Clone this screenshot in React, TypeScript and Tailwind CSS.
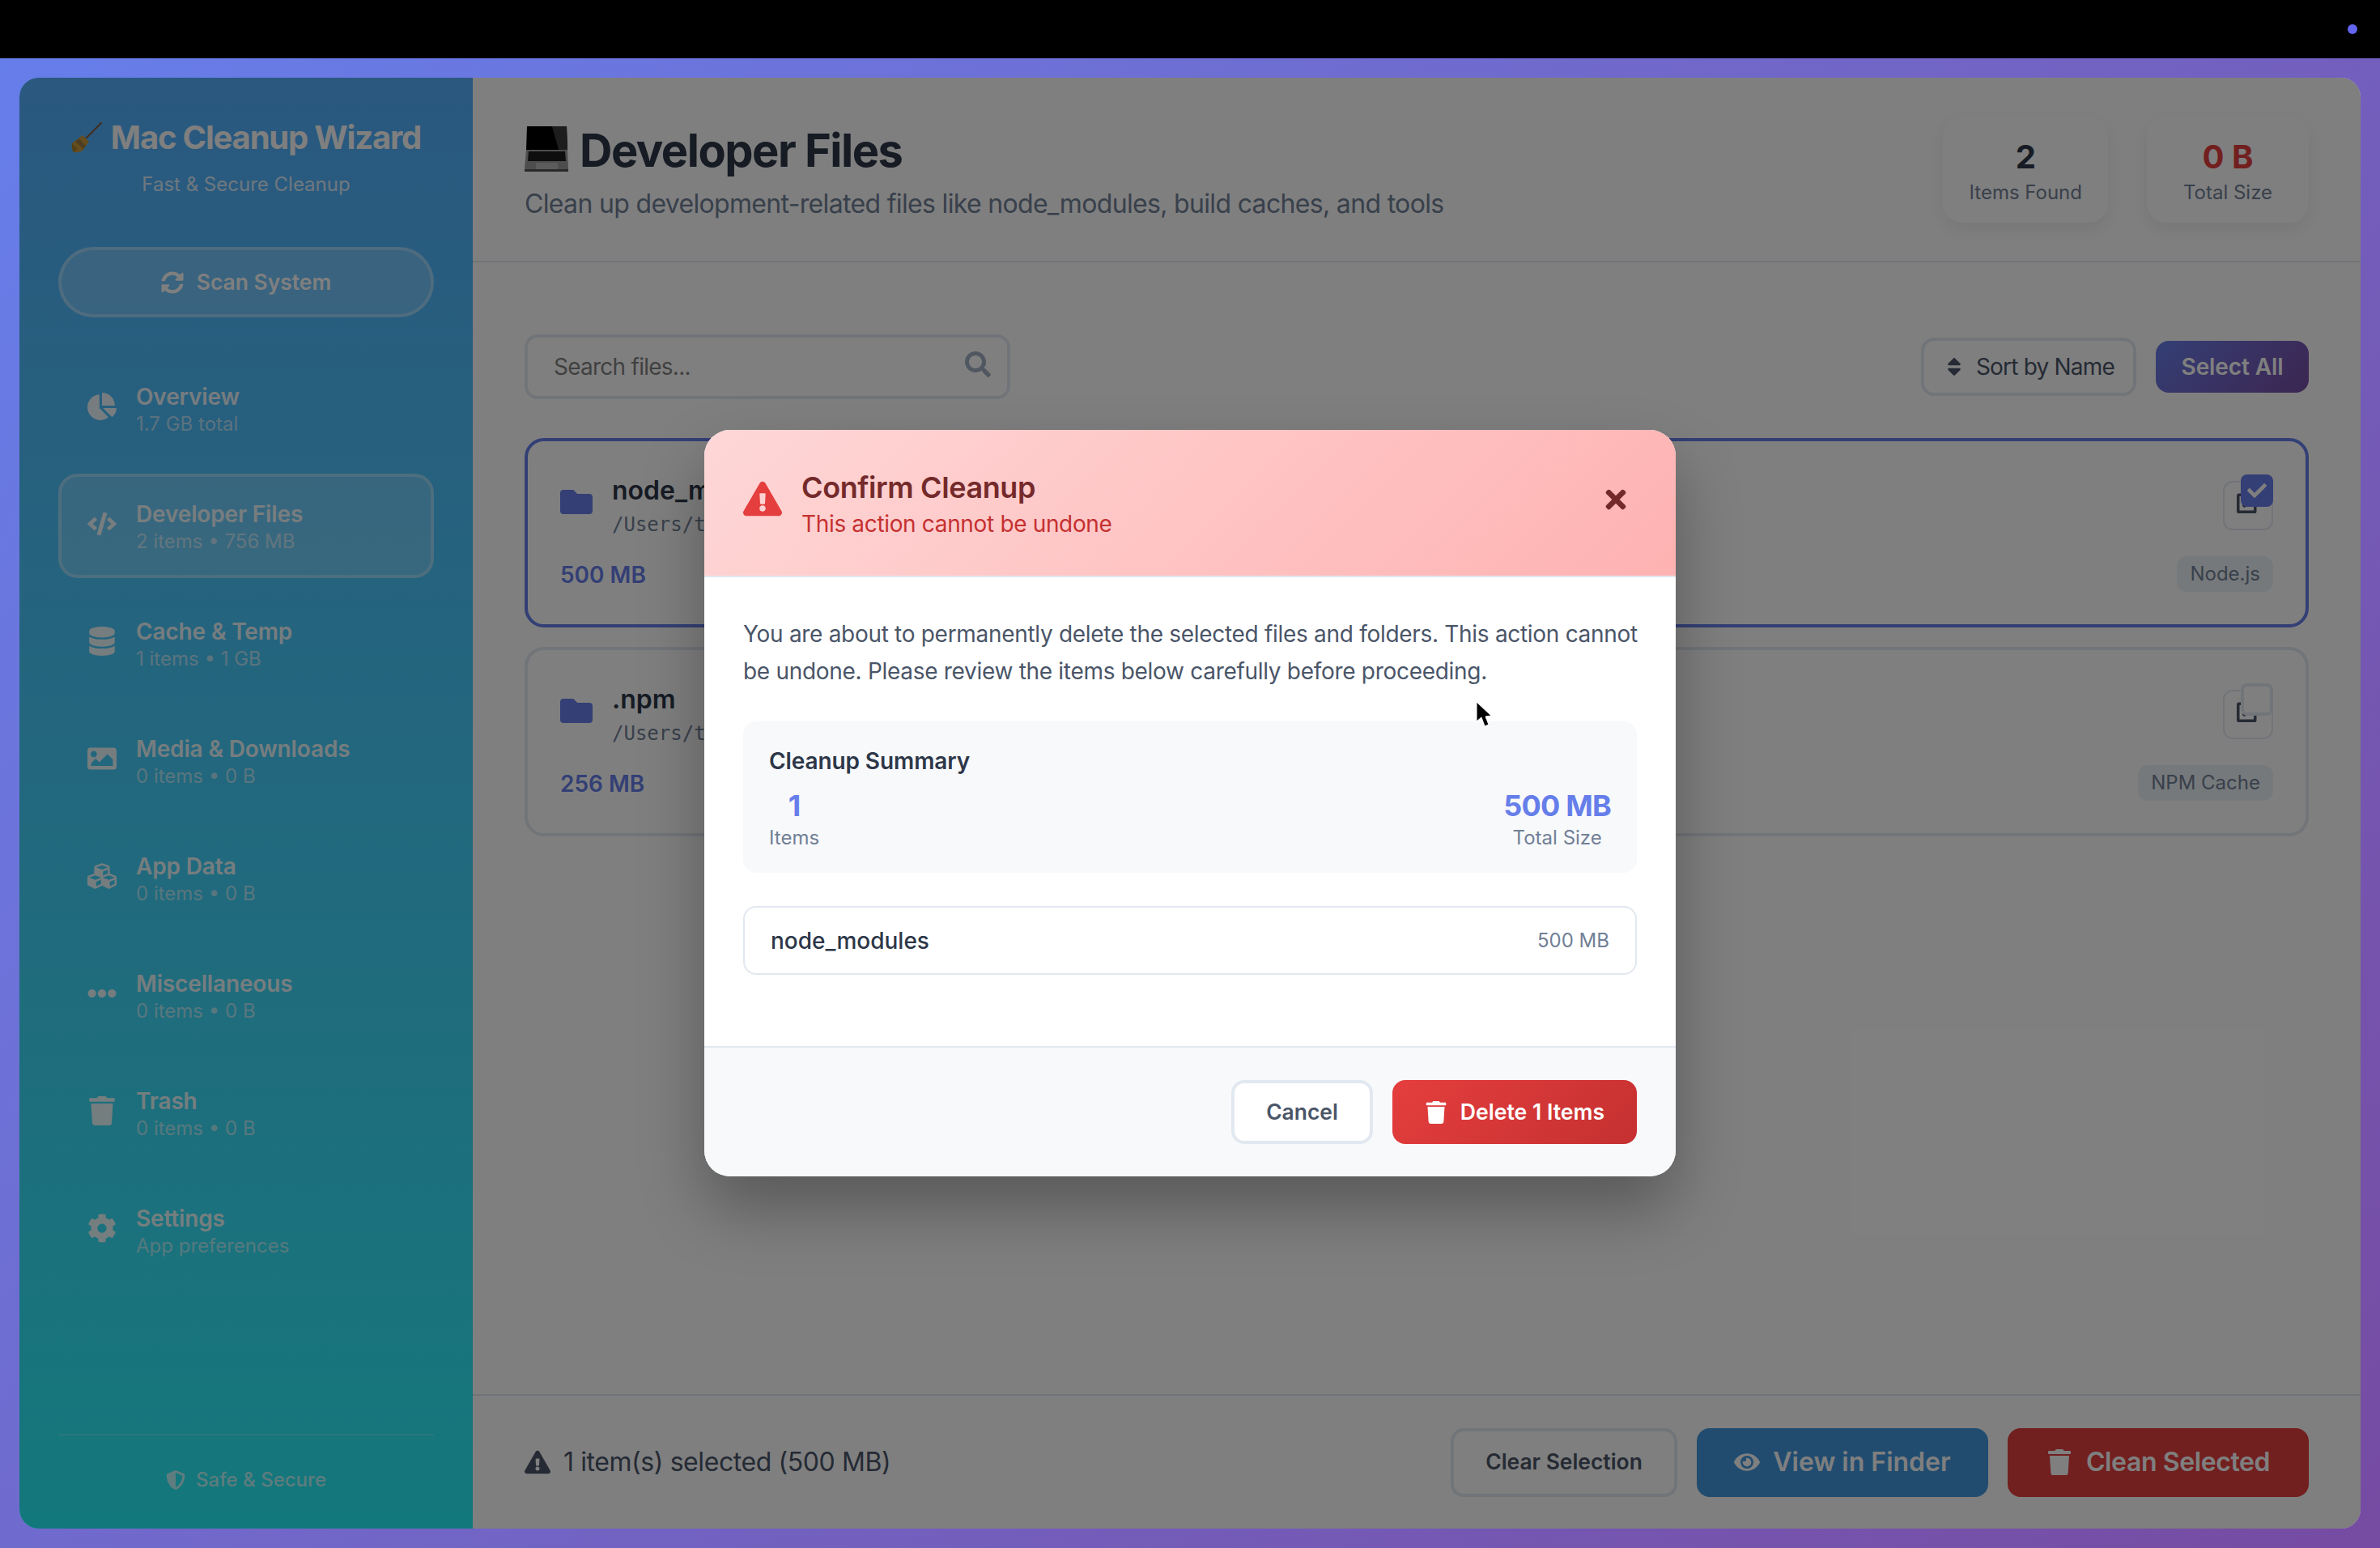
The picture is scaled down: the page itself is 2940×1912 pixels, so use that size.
import type { ReactNode } from 'react'
import {
  FaChartPie,
  FaCheck,
  FaCode,
  FaCog,
  FaCubes,
  FaDatabase,
  FaEllipsisH,
  FaExclamationTriangle,
  FaExternalLinkAlt,
  FaEye,
  FaFolder,
  FaImage,
  FaSearch,
  FaShieldAlt,
  FaSort,
  FaSyncAlt,
  FaTimes,
  FaTrash,
} from 'react-icons/fa'

const navItems = [
  { icon: <FaChartPie size={36} />, title: 'Overview', sub: '1.7 GB total' },
  { icon: <FaCode size={36} />, title: 'Developer Files', sub: '2 items • 756 MB', active: true },
  { icon: <FaDatabase size={36} />, title: 'Cache & Temp', sub: '1 items • 1 GB' },
  { icon: <FaImage size={36} />, title: 'Media & Downloads', sub: '0 items • 0 B' },
  { icon: <FaCubes size={36} />, title: 'App Data', sub: '0 items • 0 B' },
  { icon: <FaEllipsisH size={36} />, title: 'Miscellaneous', sub: '0 items • 0 B' },
  { icon: <FaTrash size={36} />, title: 'Trash', sub: '0 items • 0 B' },
  { icon: <FaCog size={36} />, title: 'Settings', sub: 'App preferences' },
]

function Broom() {
  return (
    <svg viewBox="0 0 38 38" className="h-[38px] w-[38px] shrink-0" aria-hidden="true">
      <path d="M37 1 L17 21" stroke="#8a5a3a" strokeWidth="2" strokeLinecap="round" />
      <path d="M14 16 L22 24 L14 35 Q8 38 3 37 Q0 33 1 26 Z" fill="#c99a3c" />
      <path d="M9 20 L18 29 L15 33 L5 24 Z" fill="#9a7a44" />
      <path d="M3 37 Q0 33 1 26 L8 33 Z" fill="#a8802e" />
    </svg>
  )
}

function Laptop() {
  return (
    <svg viewBox="0 0 54 56" className="h-[56px] w-[54px] shrink-0" aria-hidden="true">
      <path d="M3 0 H52 L53 29 H2 Z" fill="#000000" />
      <path d="M34 0 H52 L53 29 H42 Z" fill="#3a3a3a" />
      <path d="M2 29 H53 L54 53 H0 Z" fill="#9a9a9a" />
      <path d="M5 31 H50 L51 43 H4 Z" fill="#1c1c1c" />
      <path d="M14 45 H41 V53 H14 Z" fill="#b8b8b8" />
      <path d="M0 53 H54 V56 H0 Z" fill="#555555" />
    </svg>
  )
}

function NavItem({ icon, title, sub, active }: { icon: ReactNode; title: string; sub: string; active?: boolean }) {
  return (
    <div
      className={`flex h-[129px] items-center gap-6 rounded-3xl border-4 pl-8 ${
        active ? 'border-white/30 bg-white/20' : 'border-transparent'
      }`}
    >
      <span className="-mt-[6px] flex w-9 justify-center text-white/90">{icon}</span>
      <div className="pt-1">
        <div className="text-[28px] leading-[34px] font-semibold tracking-[-0.15px] text-white/90">{title}</div>
        <div className="text-2xl leading-[34px] text-white/60">{sub}</div>
      </div>
    </div>
  )
}

function Sidebar() {
  return (
    <aside className="flex w-[560px] shrink-0 flex-col bg-linear-to-b from-[#54b0fe] to-[#26f0f8] px-12">
      <div className="mt-[50px] flex items-center justify-center gap-[11px]">
        <Broom />
        <h1 className="text-[40px] leading-12 font-bold tracking-[-1.2px] text-white">Mac Cleanup Wizard</h1>
      </div>
      <p className="mt-[19px] text-center text-2xl leading-[29px] text-white/80">Fast &amp; Secure Cleanup</p>
      <button
        type="button"
        className="mt-[63px] flex h-[87px] items-center justify-center gap-4 rounded-full border-4 border-white/30 bg-white/20 text-[26.4px] font-semibold text-white"
      >
        <FaSyncAlt size={28} />
        Scan System
      </button>
      <nav className="mt-12 flex flex-1 flex-col gap-4">
        {navItems.map((item) => (
          <NavItem key={item.title} {...item} />
        ))}
      </nav>
      <div className="flex h-[117px] shrink-0 items-center justify-center gap-[13px] border-t-2 border-white/20 pb-[6px] text-2xl font-medium text-white/70">
        <FaShieldAlt size={24} />
        Safe &amp; Secure
      </div>
    </aside>
  )
}

function StatCard({ value, label, red }: { value: string; label: string; red?: boolean }) {
  return (
    <div className="flex h-[131px] min-w-[200px] flex-col items-center justify-center rounded-3xl bg-white px-8 shadow-[0_8px_24px_rgba(0,0,0,0.08)]">
      <div className={`mt-[4px] text-[40px] leading-12 font-bold ${red ? 'text-[#e53e3e]' : 'text-[#2d3748]'}`}>{value}</div>
      <div className="mt-[5px] text-2xl leading-[29px] text-[#718096]">{label}</div>
    </div>
  )
}

function FileCard({
  name,
  path,
  size,
  tag,
  selected,
}: {
  name: string
  path: string
  size: string
  tag: string
  selected?: boolean
}) {
  return (
    <div className={`rounded-3xl border-4 bg-white p-10 ${selected ? 'border-[#667eea]' : 'border-[#e2e8f0]'}`}>
      <div className="flex h-[85px] items-center gap-6">
        <FaFolder size={40} className="-mt-4 text-[#667eea]" />
        <div className="mb-[6px] flex-1">
          <div className="text-[32px] leading-[39px] font-semibold text-[#2d3748]">{name}</div>
          <div className="mt-[9px] font-['DejaVu_Sans_Mono',monospace] text-2xl leading-[29px] text-[#718096]">{path}</div>
        </div>
        <div className="relative mb-[7px] flex h-[61px] w-[62px] items-center justify-center rounded-xl border-2 border-[#e2e8f0] text-[#4a5568]">
          <FaExternalLinkAlt size={28} className="-mt-2" />
          {selected ? (
            <span className="absolute -top-[10px] -right-[2px] flex h-10 w-10 items-center justify-center rounded-lg bg-[#667eea] text-white">
              <FaCheck size={24} />
            </span>
          ) : (
            <span className="absolute -top-[10px] -right-[2px] h-10 w-10 rounded-lg border-4 border-[#e2e8f0] bg-white" />
          )}
        </div>
      </div>
      <div className="mt-[17px] flex items-center justify-between">
        <span className="pt-[2px] text-[28px] font-semibold text-[#667eea]">{size}</span>
        <span className="flex h-11 items-center rounded-xl bg-[#edf2f7] px-4 text-2xl text-[#718096]">{tag}</span>
      </div>
    </div>
  )
}

function Main() {
  return (
    <main className="flex min-w-0 flex-1 flex-col bg-white">
      <header className="flex h-[228px] shrink-0 items-center justify-between border-b-2 border-[#e2e8f0] px-16">
        <div>
          <div className="flex items-center gap-[14px]">
            <Laptop />
            <h2 className="pt-[4px] text-[56px] leading-[68px] font-bold tracking-[-1.5px] text-[#2d3748]">Developer Files</h2>
          </div>
          <p className="mt-[12px] text-[32px] leading-[39px] tracking-[-0.67px] text-[#718096]">
            Clean up development-related files like node_modules, build caches, and tools
          </p>
        </div>
        <div className="flex gap-12">
          <StatCard value="2" label="Items Found" />
          <StatCard value="0 B" label="Total Size" red />
        </div>
      </header>

      <section className="flex-1 px-16 pt-[89px]">
        <div className="flex items-center justify-between">
          <div className="relative h-20 w-[600px]">
            <input
              placeholder="Search files..."
              className="h-full w-full rounded-2xl border-4 border-[#e2e8f0] bg-white pr-20 pl-8 text-[28px] tracking-[-0.75px] outline-none"
            />
            <FaSearch size={32} className="absolute top-[21px] right-6 text-[#a0aec0]" />
          </div>
          <div className="flex items-center gap-6">
            <button
              type="button"
              className="flex h-[72px] items-center gap-[13px] rounded-2xl border-4 border-[#e2e8f0] bg-white px-[23px] text-[28px] tracking-[-0.8px] text-[#4a5568]"
            >
              <FaSort size={28} />
              Sort by Name
            </button>
            <button
              type="button"
              className="h-16 w-[189px] rounded-2xl bg-linear-135 from-[#667eea] to-[#764ba2] text-[28px] font-semibold tracking-[-0.1px] text-white"
            >
              Select All
            </button>
          </div>
        </div>
        <div className="mt-[48px] flex flex-col gap-6">
          <FileCard name="node_modules" path="/Users/t" size="500 MB" tag="Node.js" selected />
          <FileCard name=".npm" path="/Users/t" size="256 MB" tag="NPM Cache" />
        </div>
      </section>

      <footer className="flex h-[166px] shrink-0 items-center justify-between border-t-2 border-[#e2e8f0] pr-16 pl-16">
        <div className="flex items-center gap-4 text-[32px] tracking-[-0.42px] text-[#4a5568]">
          <FaExclamationTriangle size={32} />
          1 item(s) selected (500 MB)
        </div>
        <div className="flex gap-6">
          <button
            type="button"
            className="h-[85px] w-[280px] rounded-2xl border-4 border-[#e2e8f0] bg-white text-[26.4px] font-semibold text-[#4a5568]"
          >
            Clear Selection
          </button>
          <button
            type="button"
            className="flex h-[85px] w-[360px] items-center justify-center gap-4 rounded-2xl bg-[#4299e1] text-[32px] font-semibold text-white"
          >
            <FaEye size={32} />
            View in Finder
          </button>
          <button
            type="button"
            className="flex h-[85px] w-[372px] items-center justify-center gap-[17px] rounded-2xl bg-[#e53e3e] text-[32px] font-semibold tracking-[-0.4px] text-white"
          >
            <FaTrash size={32} />
            Clean Selected
          </button>
        </div>
      </footer>
    </main>
  )
}

function ConfirmModal() {
  return (
    <div className="relative w-[1200px] overflow-hidden rounded-[32px] bg-white shadow-[0_40px_80px_rgba(0,0,0,0.3)]">
      <div className="flex h-[182px] items-center justify-between border-b-2 border-[#e2e8f0] bg-linear-135 from-[#fed7d7] to-[#feb2b2] pr-[56px] pl-12">
        <div className="flex items-center gap-6">
          <FaExclamationTriangle size={48} className="-mt-[10px] text-[#e53e3e]" />
          <div className="pt-[2px]">
            <div className="text-[36px] leading-[44px] font-semibold tracking-[-0.4px] text-[#742a2a]">Confirm Cleanup</div>
            <div className="mt-[6px] text-[28px] leading-[34px] tracking-[-0.34px] text-[#c53030]">This action cannot be undone</div>
          </div>
        </div>
        <FaTimes size={36} className="-mt-2 text-[#742a2a]" />
      </div>
      <div className="h-[579px] px-12 pt-12">
        <p className="whitespace-nowrap text-[28px] leading-[45.5px] tracking-[-0.3px] text-[#4a5568]">
          You are about to permanently delete the selected files and folders. This action cannot
          <br />
          be undone. Please review the items below carefully before proceeding.
        </p>
        <div className="mt-[39px] h-[187px] rounded-2xl bg-[#f8f9fb] px-8 pt-8">
          <div className="text-[28px] leading-[34px] font-semibold tracking-[-0.1px] text-[#2d3748]">Cleanup Summary</div>
          <div className="mt-[14px] flex justify-between">
            <div className="text-center">
              <div className="text-[36px] leading-12 font-bold tracking-[-0.8px] text-[#667eea]">1</div>
              <div className="mt-[1px] text-2xl leading-[29px] text-[#718096]">Items</div>
            </div>
            <div className="text-center">
              <div className="text-[36px] leading-12 font-bold tracking-[-0.8px] text-[#667eea]">500 MB</div>
              <div className="mt-[1px] text-2xl leading-[29px] text-[#718096]">Total Size</div>
            </div>
          </div>
        </div>
        <div className="mt-[41px] flex h-[85px] items-center justify-between rounded-2xl border-2 border-[#e2e8f0] px-8">
          <span className="text-[28px] font-medium text-[#2d3748]">node_modules</span>
          <span className="text-2xl text-[#718096]">500 MB</span>
        </div>
      </div>
      <div className="flex h-[161px] items-center justify-end gap-6 border-t-2 border-[#e2e8f0] bg-[#f8f9fb] px-12">
        <button
          type="button"
          className="h-[79px] w-[175px] rounded-2xl border-4 border-[#e2e8f0] bg-white text-[26.4px] font-semibold text-[#4a5568]"
        >
          Cancel
        </button>
        <button
          type="button"
          className="flex h-[79px] w-[302px] items-center justify-center gap-4 rounded-2xl bg-linear-135 from-[#e53e3e] to-[#c53030] text-[26.6px] font-semibold text-white"
        >
          <FaTrash size={28} />
          Delete 1 Items
        </button>
      </div>
      {/* mouse pointer caught in the capture */}
      <svg viewBox="0 0 20 34" className="absolute top-[335px] left-[953px] h-[34px] w-[20px]" aria-hidden="true">
        <path d="M1 1 L1 25 L7 20 L11 31 L16 29 L12 19 L19 18 Z" fill="#000000" stroke="#ffffff" strokeWidth="1" />
      </svg>
    </div>
  )
}

export default function App() {
  return (
    <div className="flex h-[1912px] w-[2940px] flex-col overflow-hidden bg-black font-['Inter',sans-serif]">
      <div className="flex h-[72px] shrink-0 items-center justify-end pr-[28px]">
        <span className="h-3 w-3 rounded-full bg-[#6366f1]" />
      </div>
      <div className="flex-1 bg-linear-135 from-[#667eea] to-[#764ba2] p-6">
        <div className="relative flex h-full overflow-hidden rounded-3xl">
          <Sidebar />
          <Main />
          <div className="absolute inset-0 flex items-center justify-center bg-black/50">
            <ConfirmModal />
          </div>
        </div>
      </div>
    </div>
  )
}
